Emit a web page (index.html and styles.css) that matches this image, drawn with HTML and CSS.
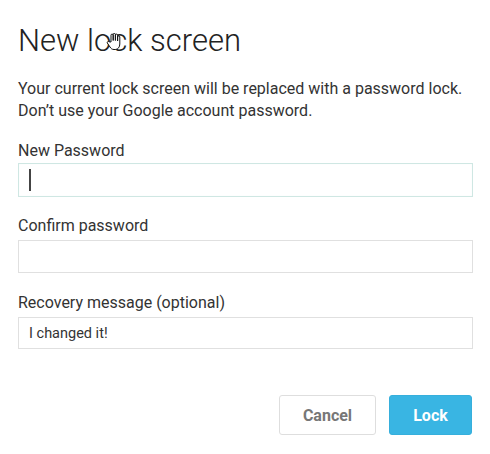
FILE: index.html
```html
<!DOCTYPE html>
<html>
<head>
<meta charset="utf-8">
<link rel="stylesheet" href="styles.css">
</head>
<body>
<div class="dialog">
  <h1 class="title">New lock screen</h1>
  <p class="desc">Your current lock screen will be replaced with a password lock.<br>Don’t use your Google account password.</p>
  <div class="field first">
    <label class="label">New Password</label>
    <div class="input focused"><span class="caret"></span></div>
  </div>
  <div class="field">
    <label class="label">Confirm password</label>
    <div class="input"></div>
  </div>
  <div class="field third">
    <label class="label">Recovery message (optional)</label>
    <div class="input short"><span class="value">I changed it!</span></div>
  </div>
  <div class="actions">
    <button class="btn cancel">Cancel</button>
    <button class="btn lock">Lock</button>
  </div>
  <svg class="pointer" width="16" height="18" viewBox="0 0 16 18">
    <path d="M5 9 V2.2 a1.1 1.1 0 0 1 2.2 0 V7.5 V1.5 a1.1 1.1 0 0 1 2.2 0 V7.5 V2.2 a1.1 1.1 0 0 1 2.2 0 V8 V4 a1.1 1.1 0 0 1 2.2 0 V11 c0 3 -1.8 5.5 -4.5 5.5 H8 c-2 0 -3 -1 -4 -2.5 L1.3 10 a1.1 1.1 0 0 1 1.8 -1.2 Z" fill="#fff" stroke="#111" stroke-width="1" stroke-linejoin="round"/>
  </svg>
</div>
</body>
</html>
```
FILE: styles.css
```css
html, body {
  margin: 0;
  padding: 0;
  background: #fff;
}
body {
  font-family: Roboto, "Liberation Sans", sans-serif;
  color: #333;
}
.dialog {
  position: relative;
  width: 490px;
  height: 454px;
  box-sizing: border-box;
  padding: 23px 17px 0 18px;
}
.title {
  margin: 0;
  font-size: 31px;
  line-height: 36px;
  font-weight: 300;
  color: #222;
}
.desc {
  margin: 19px 0 0 0;
  font-size: 16px;
  line-height: 22px;
  color: #333;
}
.field {
  display: flex;
  flex-direction: column;
  gap: 4px;
  margin-top: 19px;
}
.field.first {
  margin-top: 19px;
  gap: 2px;
}
.field.third {
  margin-top: 20px;
}
.label {
  font-size: 16px;
  line-height: 20px;
  color: #333;
}
.input {
  height: 33px;
  box-sizing: border-box;
  border: 1px solid #e0e0e0;
  background: #fff;
  display: flex;
  align-items: center;
  padding-left: 10px;
}
.input.focused {
  height: 34px;
  border-color: #cfe7e3;
  box-shadow: inset 0 0 1px #e3f1ef;
}
.input.short {
  height: 32px;
}
.caret {
  display: block;
  width: 1.5px;
  height: 22px;
  background: #444;
}
.value {
  font-size: 14.5px;
  color: #333;
}
.actions {
  display: flex;
  justify-content: flex-end;
  gap: 13px;
  margin-top: 46px;
  padding-right: 1px;
}
.btn {
  height: 40px;
  font-family: Roboto, "Liberation Sans", sans-serif;
  font-size: 16px;
  font-weight: 700;
  border-radius: 3px;
  cursor: pointer;
}
.cancel {
  width: 97px;
  background: #fff;
  border: 1px solid #dedede;
  color: #777;
}
.lock {
  width: 83px;
  background: #39b5e3;
  border: 1px solid #36afdc;
  color: #fff;
}
.pointer {
  position: absolute;
  left: 106px;
  top: 33px;
}
```
